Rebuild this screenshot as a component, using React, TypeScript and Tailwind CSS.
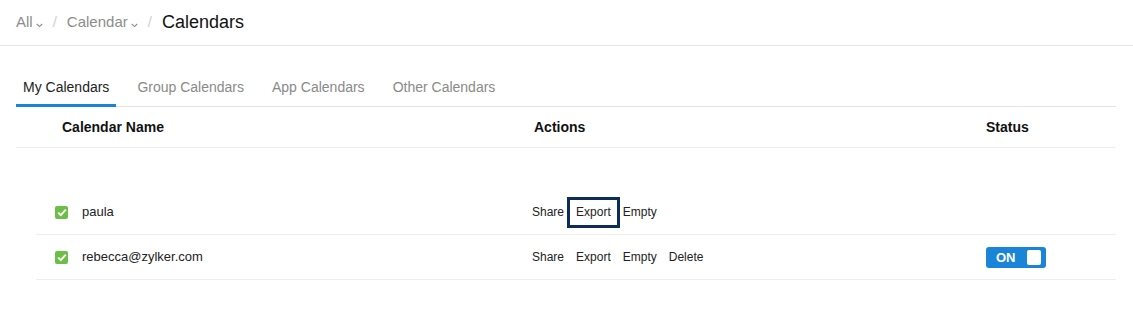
import React from "react";

const TABS = ["My Calendars", "Group Calendars", "App Calendars", "Other Calendars"];

const CALENDARS = [
  { name: "paula", actions: ["Share", "Export", "Empty"], focus: "Export", on: false },
  { name: "rebecca@zylker.com", actions: ["Share", "Export", "Empty", "Delete"], focus: null, on: true },
];

function Chevron() {
  return (
    <svg width="7" height="5" viewBox="0 0 7 5" className="ml-[3px] mt-[6px]">
      <path d="M0.8 1l2.7 2.6L6.2 1" fill="none" stroke="#8c8c8c" strokeWidth="1.1" />
    </svg>
  );
}

function Check() {
  return (
    <span className="flex h-[13px] w-[13px] items-center justify-center rounded-[2px] bg-[#6bbf47]">
      <svg width="10" height="9" viewBox="0 0 10 9">
        <path d="M1.2 4.6l2.6 2.5L8.8 1.6" fill="none" stroke="#fff" strokeWidth="2" />
      </svg>
    </span>
  );
}

function Toggle() {
  return (
    <div className="flex h-[21px] w-[60px] items-center justify-between rounded-[3px] bg-[#1a85d8] pl-[10px] pr-[5px]">
      <span className="text-[13px] font-bold leading-none text-white">ON</span>
      <span className="h-[15px] w-[14px] rounded-[2px] bg-white" />
    </div>
  );
}

export default function App() {
  return (
    <div className="h-[335px] w-[1133px] bg-white font-['Liberation_Sans',Arial,sans-serif]">
      {/* breadcrumb */}
      <div className="flex h-[46px] items-center border-b border-[#e6e6e6] pl-4">
        <span className="flex items-center text-[15px] text-[#8c8c8c]">
          All
          <Chevron />
        </span>
        <span className="mx-[10px] text-[15px] text-[#d0d0d0]">/</span>
        <span className="flex items-center text-[15px] text-[#8c8c8c]">
          Calendar
          <Chevron />
        </span>
        <span className="mx-[10px] text-[15px] text-[#d0d0d0]">/</span>
        <span className="text-[18px] text-[#111]">Calendars</span>
      </div>

      <div className="pl-4 pr-[17px]">
        {/* tabs */}
        <div className="mt-[31px] flex gap-[14px] border-b border-[#e3e3e3]">
          {TABS.map((t, i) => (
            <div
              key={t}
              className={
                i === 0
                  ? "-mb-px border-b-[3px] border-[#1a85d8] px-[7px] pb-[5px] text-[14px] text-[#222]"
                  : "px-[7px] pb-[8px] text-[14px] text-[#8a8a8a]"
              }
            >
              {t}
            </div>
          ))}
        </div>

        {/* header */}
        <div className="flex h-[41px] items-center border-b border-[#eeeeee] text-[14px] font-bold text-[#111]">
          <div className="w-[518px] pl-[46px]">Calendar Name</div>
          <div className="w-[452px]">Actions</div>
          <div>Status</div>
        </div>

        {/* rows */}
        <div className="ml-5 mt-[42px]">
          {CALENDARS.map((c) => (
            <div key={c.name} className="flex h-[45px] items-center border-b border-[#eeeeee]">
              <div className="flex w-[496px] items-center pl-[19px]">
                <Check />
                <span className="ml-[14px] text-[13px] text-[#222]">{c.name}</span>
              </div>
              <div className="flex w-[454px] gap-[12px] text-[12px] text-[#222]">
                {c.actions.map((a) => (
                  <span key={a} className="relative leading-[14px]">
                    {a}
                    {c.focus === a && (
                      <span className="absolute -inset-x-[9px] -top-[8px] -bottom-[9px] border-[3px] border-[#0c2d5a]" />
                    )}
                  </span>
                ))}
              </div>
              <div>{c.on && <Toggle />}</div>
            </div>
          ))}
        </div>
      </div>
    </div>
  );
}
